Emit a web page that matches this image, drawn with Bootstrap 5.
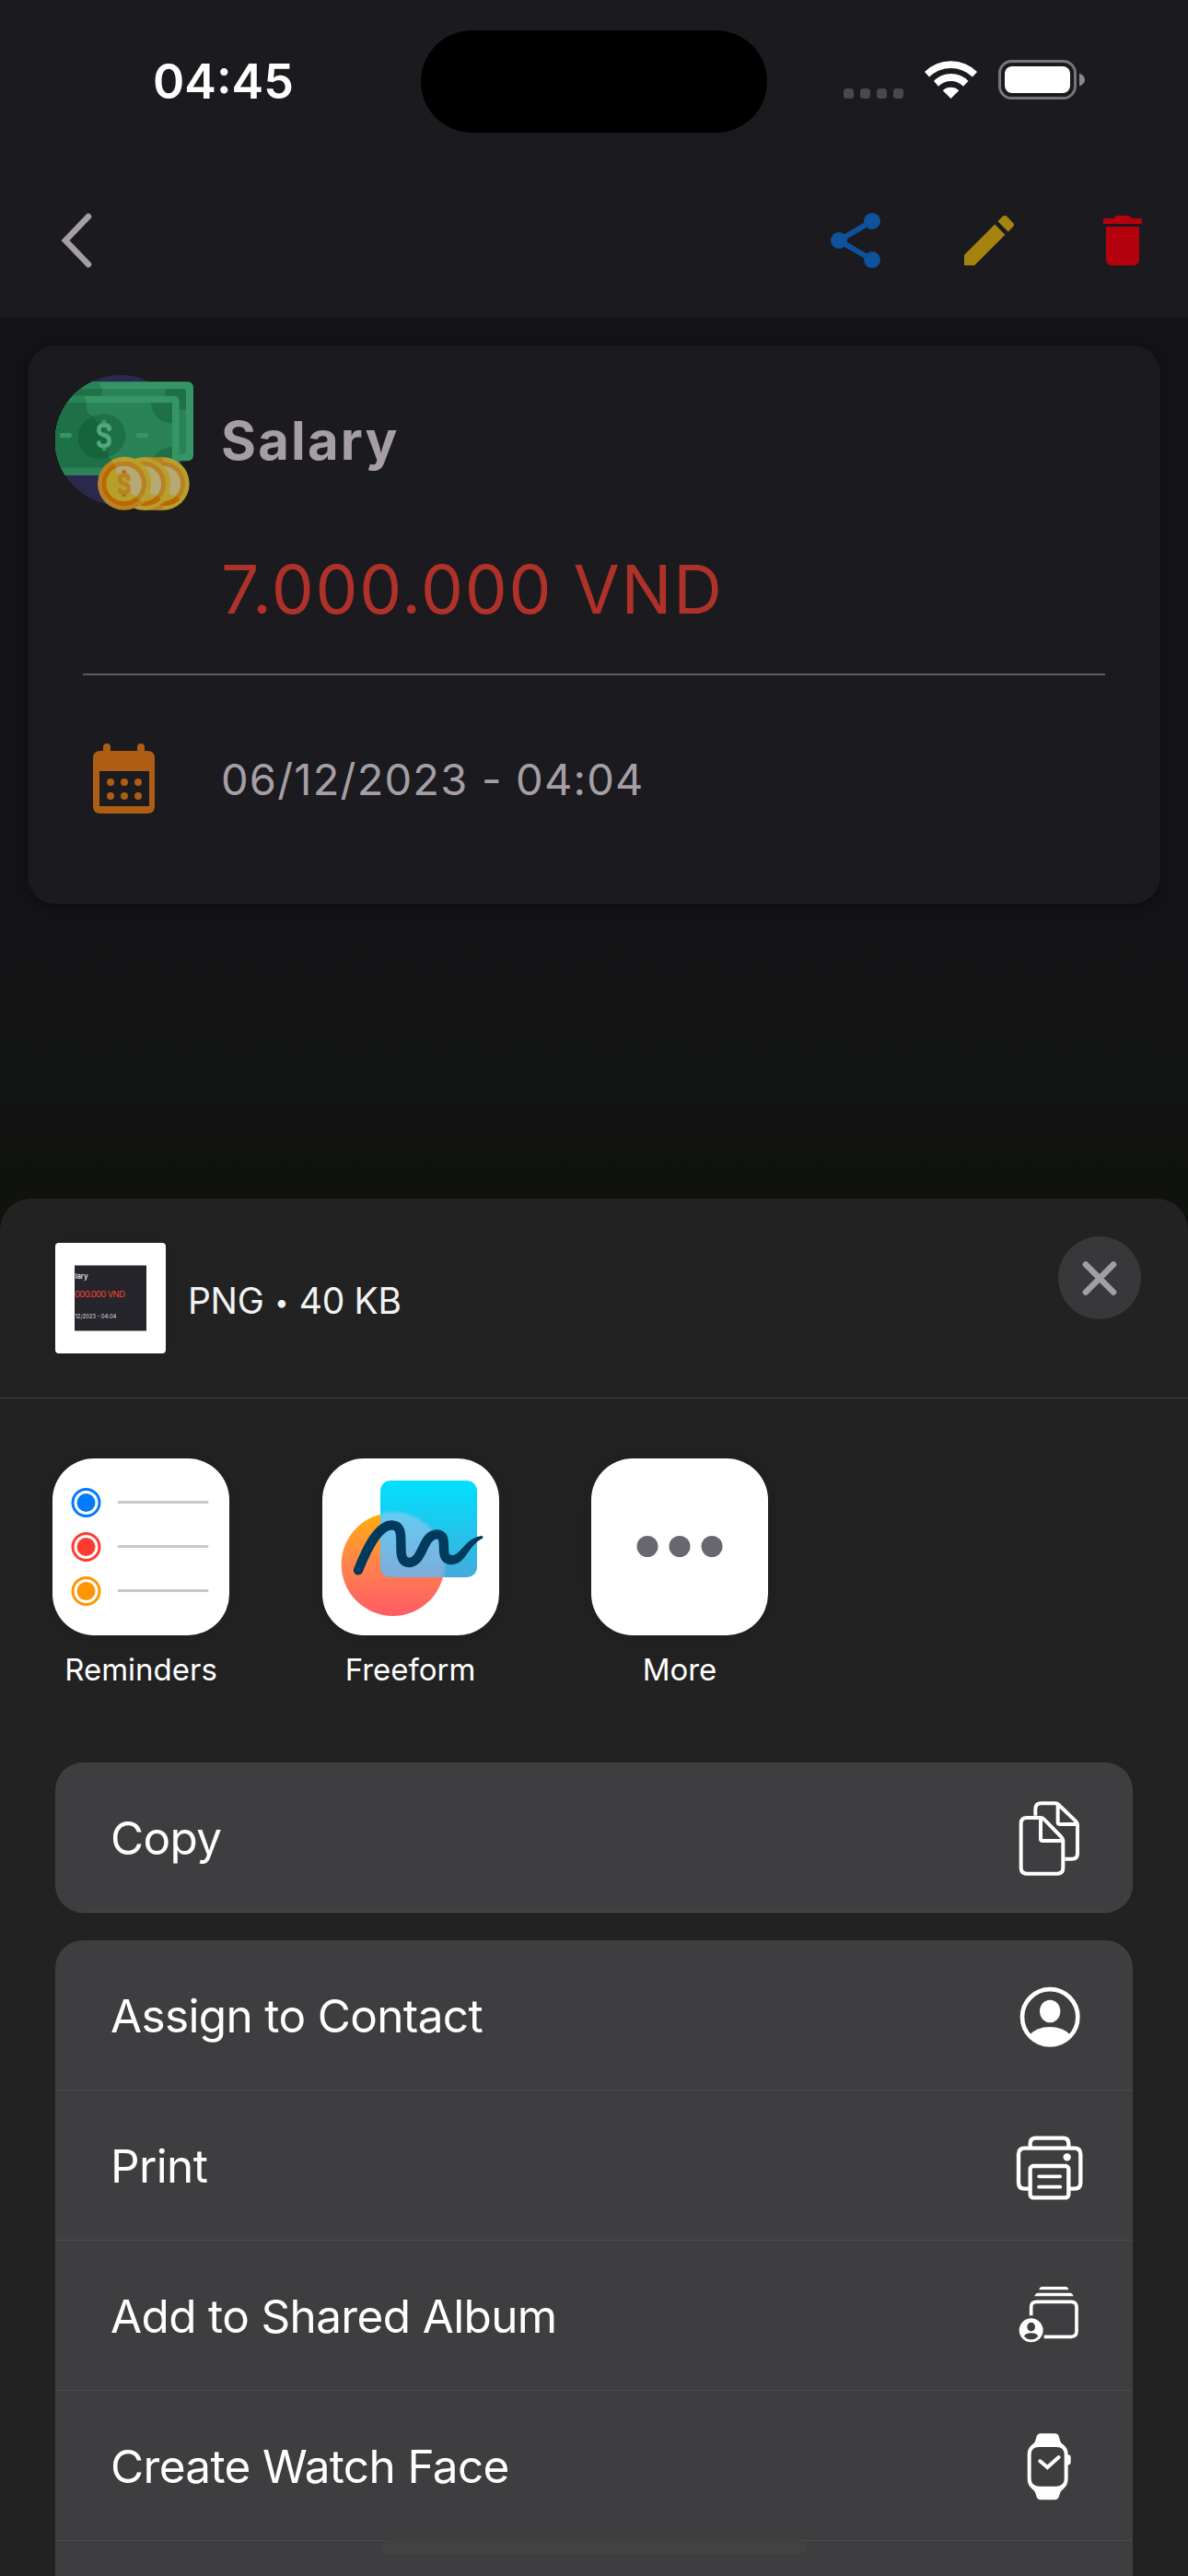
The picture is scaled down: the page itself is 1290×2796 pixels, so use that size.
<!DOCTYPE html>
<html lang="en">
<head>
<meta charset="utf-8">
<meta name="viewport" content="width=device-width, initial-scale=1">
<title>Transaction details</title>
<link href="https://cdn.jsdelivr.net/npm/bootstrap@5.3.0/dist/css/bootstrap.min.css" rel="stylesheet">
<style>
html,body{margin:0;overflow:hidden}
body{font-family:Inter,"Liberation Sans",sans-serif;background:#131315;color:#fff;line-height:1;width:1290px;height:2796px}
svg{display:block;flex:none}
.screen{width:1290px;height:2796px;background:linear-gradient(#131315 0,#131315 1000px,#121313 1190px,#10120e 1270px,#10120e 1400px)}
.top-zone{height:345px;background:#1b1a1f}
.status-row{height:177px}
.clock-col{width:457px;padding:1px 0 0 166px;font-size:52px;font-weight:600}
.island{width:376px;height:111px;border-radius:56px;background:#000}
.signal-col{padding:0 0 4px 83px}
.app-row{height:168px;padding:0 35px 0 47px}
.icon-gap{gap:73px}
.txn{margin:30px 30px 0;height:606px;border-radius:30px;background:#1b1a1e;box-shadow:0 3px 8px rgba(0,0,0,.3);padding-top:32px}
.txn-head{padding-left:30px;gap:30px;height:147px}
.txn-title{font-size:58px;font-weight:700;letter-spacing:2.2px;color:#a59fa5;padding-bottom:5px}
.txn-amount{font-size:73px;letter-spacing:1.7px;color:#ae312a;padding-left:210px;height:110px;margin-top:31px;line-height:110px}
.txn-rule{height:2px;background:#5c5c60;margin:36px 60px 0}
.txn-date{padding-left:71px;gap:71px;margin-top:74px;height:77px;font-size:47px;letter-spacing:1.2px;color:#a59fa5}
.share-sheet{margin-top:320px;height:1495px;border-radius:34px 34px 0 0;background:#222;overflow:hidden}
.sheet-head{height:217px;border-bottom:1px solid #404041;padding:41px 51px 0 60px}
.thumb{width:120px;height:120px;border-radius:4px;background:#fff;margin-top:7px;box-shadow:0 0 24px rgba(0,0,0,.12)}
.file-info{font-size:39px;letter-spacing:-.3px;color:#f2f2f2;padding-left:24px;padding-top:50px}
.file-dot{font-size:27px;vertical-align:3px;margin:0 1px}
.close-btn{width:90px;height:90px;border-radius:50%;background:#38383a}
.apps{padding:65px 0 0 57px;gap:100.5px;height:395px}
.app-item{width:192px}
.app-tile{width:192px;height:192px;border-radius:45px;background:#fff;overflow:hidden;box-shadow:0 0 30px rgba(0,0,0,.12)}
.app-name{font-size:33px;margin-top:21px;white-space:nowrap}
.actions{margin:0 60px;background:#3e3e40;border-radius:30px;overflow:hidden}
.actions + .actions{margin-top:30px;border-radius:30px 30px 0 0;height:690px}
.action-row{height:163px;padding:0 50.2px 0 60px;font-size:49.5px;letter-spacing:-.65px;border-bottom:1px solid #4b4b4d}
.action-row span{padding-top:4px}
.actions:first-of-type .action-row{border:0;letter-spacing:-1.2px}
.home-bar{position:absolute;left:414px;top:2757px;width:462px;height:15px;border-radius:8px;background:#424242}
</style>
<script src="https://cdn.jsdelivr.net/npm/bootstrap@5.3.0/dist/js/bootstrap.bundle.min.js"></script>
</head>
<body>
<div class="screen position-relative overflow-hidden">
  <header class="top-zone">
    <div class="status-row d-flex align-items-center">
      <div class="clock-col"><span>04:45</span></div>
      <div class="island"></div>
      <div class="signal-col">
        <svg width="262" height="43" viewBox="916 65 262 43">
          <g fill="#49484d"><rect x="916" y="96" width="11" height="11" rx="3.5"/><rect x="934" y="96" width="11" height="11" rx="3.5"/><rect x="952" y="96" width="11" height="11" rx="3.5"/><rect x="970" y="96" width="11" height="11" rx="3.5"/></g>
          <g fill="#fff">
            <path d="M1004 78A40.500 40.500 0 0 1 1061 78L1056 83.500A34 34 0 0 0 1009 83.500Z"/>
            <path d="M1014 88A26 26 0 0 1 1051.500 88L1046 93.700A19 19 0 0 0 1019 93.700Z"/>
            <path d="M1023.700 98.300A13 13 0 0 1 1041.300 98.300L1032.500 107Z"/>
          </g>
          <rect x="1085.500" y="66.500" width="82" height="40" rx="13" fill="none" stroke="#77767a" stroke-width="3"/>
          <rect x="1091" y="72" width="71" height="29" rx="8" fill="#fff"/>
          <path d="M1172 79.500Q1178 82 1178 86.500T1172 93.500Z" fill="#8a898c"/>
        </svg>
      </div>
    </div>
    <nav class="app-row d-flex align-items-center justify-content-between">
      <svg width="72" height="72" viewBox="48 225 72 72"><path d="M97 235L72 261L97 287" fill="none" stroke="#a59fa5" stroke-width="6.500" stroke-linecap="round"/></svg>
      <div class="icon-gap d-flex">
        <svg width="72" height="72" viewBox="0 0 24 24"><g fill="#0d529b" stroke="#0d529b"><path d="M18 5L6 12l12 7" fill="none" stroke-width="2"/><g stroke="none"><circle cx="18" cy="5" r="3"/><circle cx="6" cy="12" r="3"/><circle cx="18" cy="19" r="3"/></g></g></svg>
        <svg width="72" height="72" viewBox="0 0 24 24"><path fill="#a4840e" d="M3 17.250V21h3.750L17.810 9.940l-3.750-3.750L3 17.250zM20.710 7.040c.39-.39.39-1.020 0-1.410l-2.340-2.340c-.39-.39-1.020-.39-1.410 0l-1.830 1.830 3.750 3.750 1.830-1.830z"/></svg>
        <svg width="72" height="72" viewBox="0 0 24 24"><path fill="#b5000e" d="M6 19c0 1.100.9 2 2 2h8c1.100 0 2-.9 2-2V7H6v12zM19 4h-3.500l-.7-.7q-.3-.3-.8-.3h-4q-.5 0-.8.3l-.7.700H5v2h14V4z"/></svg>
      </div>
    </nav>
  </header>

  <main class="txn">
    <div class="txn-head d-flex align-items-center">
      <svg width="150" height="147" viewBox="90 50 450 441">
        <defs><clipPath id="disc"><path d="M303 50A213 213 0 0 0 303 477H560V50Z"/></clipPath></defs>
        <circle cx="303" cy="263" r="213" fill="#2b284b"/>
        <g clip-path="url(#disc)">
          <rect x="40" y="72" width="500" height="258" rx="18" fill="#359565"/>
          <path d="M90 72H234Q234 86 243 96V118H90Z" fill="#298356"/>
          <path d="M90 96H507Q516 96 516 105V298Q516 307 507 307H90Z" fill="#298356"/>
          <path d="M90 96H242V118H90ZM449 96H508Q516 96 516 104V162H494L449 118Z" fill="#1e7146"/>
          <path d="M40 118H476Q494 118 494 136V376H40Z" fill="#359565"/>
          <path d="M40 118H185Q188 134 194 141V170H40Z" fill="#298356"/>
          <rect x="40" y="141" width="431" height="211" fill="#298356"/>
          <path d="M40 141H192V160Q195 182 219 184Q216 206 248 212L264 316Q278 330 282 352H40Z" fill="#1e7146"/>
          <path d="M40 352H290V376H40Z" fill="#298356"/>
          <path d="M402 141H471V208Q408 203 402 141ZM471 284Q414 290 404 335L471 352Z" fill="#1e7146"/>
        </g>
        <circle cx="249" cy="247" r="70" fill="#1e7146"/>
        <path d="M217 185Q217 207 244 212L264 316A70 70 0 1 1 217 185Z" fill="#16653a"/>
        <g fill="#359565"><rect x="104" y="239" width="40" height="16" rx="7"/><rect x="354" y="239" width="40" height="16" rx="7"/></g>
        <path d="M241 200q8-10 16 0v10h-16zM241 288h16v5q-8 10-16 0z" fill="#359565"/>
        <path d="M266 226Q266 213 249 213Q232 213 232 229Q232 241 249 246Q266 251 266 264Q266 281 249 281Q232 281 232 271" fill="none" stroke="#4caa7b" stroke-width="14" stroke-linecap="round"/>
        <circle cx="441" cy="404" r="86" fill="#b89f2c"/><circle cx="441" cy="404" r="72" fill="#b88126"/><circle cx="441" cy="404" r="58" fill="#b89f2c"/>
        <path d="M451 462A58 58 0 0 0 484 443L497 456A76 76 0 0 1 430 475Z" fill="#b96900"/><path d="M440 346A58 58 0 0 1 484 441Q455 445 462 415Q475 380 440 346Z" fill="#b5a976"/>
        <path d="M378 490H441V476H378ZM378 318H441V332H378Z" fill="#b88126"/>
        <circle cx="378" cy="404" r="86" fill="#b89f2c"/><circle cx="378" cy="404" r="72" fill="#b88126"/><circle cx="378" cy="404" r="58" fill="#b89f2c"/>
        <path d="M388 462A58 58 0 0 0 421 443L434 456A76 76 0 0 1 367 475Z" fill="#b96900"/><path d="M377 346A58 58 0 0 1 421 441Q392 445 399 415Q412 380 377 346Z" fill="#b5a976"/>
        <circle cx="314" cy="404" r="86" fill="#b88126"/><path d="M273 328A86 86 0 0 1 374 466L359 450L285 345Z" fill="#b89f2c"/>
        <circle cx="314" cy="404" r="72" fill="#b96900"/><path d="M281 340A72 72 0 0 1 363 457L350 445L290 355Z" fill="#b88126"/>
        <circle cx="314" cy="404" r="58" fill="#b89f2c"/><path d="M287 353A58 58 0 0 1 357 443Q328 446 335 412Q329 377 304 374Q285 372 287 353Z" fill="#b5a976"/>
        <path d="M307 363q8-7 14 0v7h-14zM307 437h14v6q-7 8-14 0z" fill="#b96900"/>
        <path d="M329 388Q329 376 314 376Q300 376 300 390Q300 400 314 404Q329 408 329 419Q329 433 314 433Q300 433 300 425" fill="none" stroke="#b88126" stroke-width="13" stroke-linecap="round"/>
      </svg>
      <div class="txn-title">Salary</div>
    </div>
    <div class="txn-amount text-nowrap">7.000.000 VND</div>
    <div class="txn-rule"></div>
    <div class="txn-date d-flex align-items-center">
      <svg width="68" height="77" viewBox="101 808 68 77"><path fill="#ad5d14" fill-rule="evenodd" d="M112 816V812q0-4 4-4t4 4v4h29v-4q0-4 4-4t4 4v4h3q8 0 8 8v52q0 8-8 8h-51q-8 0-8-8v-52q0-8 8-8zM108 838v38h54v-38z"/><g fill="#ad5d14"><circle cx="120" cy="850" r="4"/><circle cx="135" cy="850" r="4"/><circle cx="150" cy="850" r="4"/><circle cx="120" cy="865" r="4"/><circle cx="135" cy="865" r="4"/><circle cx="150" cy="865" r="4"/></g></svg>
      <span>06/12/2023 - 04:04</span>
    </div>
  </main>

  <section class="share-sheet">
    <div class="sheet-head d-flex">
      <svg class="thumb" viewBox="0 0 120 120"><rect x="21" y="24" width="78" height="72" fill="#919196"/><rect x="21" y="25" width="78" height="70" fill="#26252b"/><g font-family="Inter, sans-serif"><text x="21.500" y="39" font-size="8" font-weight="500" fill="#eee" textLength="14">lary</text><text x="21" y="59" font-size="9.500" fill="#f0433a" textLength="55">000.000 VND</text><text x="21.500" y="82" font-size="6" fill="#ddd" textLength="45">12/2023 - 04:04</text></g></svg>
      <div class="file-info flex-grow-1">PNG <span class="file-dot">•</span> 40 KB</div>
      <div class="close-btn d-flex align-items-center justify-content-center"><svg width="90" height="90" viewBox="0 0 90 90"><path d="M30 30.500L60 60.500M60 30.500L30 60.500" stroke="#a09fa6" stroke-width="6.600" stroke-linecap="round"/></svg></div>
    </div>
    <div class="apps d-flex">
      <div class="app-item d-flex flex-column align-items-center">
        <svg class="app-tile" viewBox="0 0 192 192"><g fill="none" stroke-width="3"><circle cx="36.500" cy="48" r="14.500" stroke="#007aff"/><circle cx="36.500" cy="96" r="14.500" stroke="#ff3b30"/><circle cx="36.500" cy="144" r="14.500" stroke="#ff9500"/></g><circle cx="36.500" cy="48" r="10" fill="#007aff"/><circle cx="36.500" cy="96" r="10" fill="#ff3b30"/><circle cx="36.500" cy="144" r="10" fill="#ff9500"/><path d="M72 47.500h96M72 95.500h96M72 143.500h96" stroke="#c7c7cc" stroke-width="3" stroke-linecap="round"/></svg>
        <div class="app-name">Reminders</div>
      </div>
      <div class="app-item d-flex flex-column align-items-center">
        <svg class="app-tile" viewBox="30 39 576 576">
          <defs>
            <linearGradient id="sun" x1="0" y1="0" x2="0" y2="1"><stop offset="0" stop-color="#ffae0d"/><stop offset=".5" stop-color="#ff834c"/><stop offset="1" stop-color="#ff5b65"/></linearGradient>
            <linearGradient id="pane" x1="0" y1="0" x2="0" y2="1"><stop offset="0" stop-color="#00e0ff"/><stop offset="1" stop-color="#43abdb"/></linearGradient>
            <linearGradient id="frost" x1="0" y1="0" x2="0" y2="1"><stop offset="0" stop-color="#66cbf3"/><stop offset=".62" stop-color="#7cacda"/></linearGradient>
            <clipPath id="paneclip"><rect x="219" y="111" width="315" height="315" rx="34"/></clipPath>
            <filter id="soft"><feGaussianBlur stdDeviation="5"/></filter>
          </defs>
          <circle cx="260" cy="384" r="168" fill="url(#sun)"/>
          <rect x="219" y="111" width="315" height="315" rx="34" fill="url(#pane)"/>
          <g clip-path="url(#paneclip)"><circle cx="260" cy="384" r="170" fill="url(#frost)" filter="url(#soft)"/></g>
          <path d="M147 403C176 330 212 256 257 256C315 256 258 378 313 378C358 378 356 286 403 286C448 286 403 369 450 369" fill="none" stroke="#003a5d" stroke-width="31" stroke-linecap="round"/>
          <path d="M450 384.500C500 384.500 500 325 552 299Q556 291 548 291C494 299 482 355 450 355Z" fill="#003a5d"/>
        </svg>
        <div class="app-name">Freeform</div>
      </div>
      <div class="app-item d-flex flex-column align-items-center">
        <svg class="app-tile" viewBox="0 0 192 192"><g fill="#68676f"><circle cx="61" cy="95.500" r="11.500"/><circle cx="96" cy="95.500" r="11.500"/><circle cx="131" cy="95.500" r="11.500"/></g></svg>
        <div class="app-name">More</div>
      </div>
    </div>
    <div class="actions">
      <div class="action-row d-flex align-items-center justify-content-between">
        <span>Copy</span>
        <svg width="80" height="88" viewBox="148 151 240 264"><g fill="none" stroke="#fff" stroke-width="12" stroke-linejoin="round"><path d="M221 213V192Q221 173 240 173H286Q292 173 297 178L352 231Q358 237 358 243V336Q358 354 340 354H317"/><path d="M294 174V234Q294 241 301 241H357"/><path d="M193 220H238Q244 220 249 225L304 281Q311 288 311 295V383Q311 402 292 402H193Q174 402 174 383V239Q174 220 193 220Z"/><path d="M238 221V288Q238 295 245 295H309"/></g></svg>
      </div>
    </div>
    <div class="actions">
      <div class="action-row d-flex align-items-center justify-content-between">
        <span>Assign to Contact</span>
        <svg width="80" height="88" viewBox="148 729 240 264"><circle cx="268.500" cy="868" r="90.500" fill="none" stroke="#fff" stroke-width="14"/><ellipse cx="268.500" cy="849" rx="33.500" ry="37" fill="#fff"/><path d="M202 926Q226 900 268 900T335 926Q312 963 268 963T202 926Z" fill="#fff"/></svg>
      </div>
      <div class="action-row d-flex align-items-center justify-content-between">
        <span>Print</span>
        <svg width="80" height="88" viewBox="148 77 240 264"><g fill="none" stroke="#fff" stroke-width="13"><path d="M204 152V139Q204 121 222 121H311Q329 121 329 139V152"/><path d="M200 286H186Q166 286 166 266V174Q166 154 186 154H348Q368 154 368 174V266Q368 286 348 286H333"/><rect x="204" y="212" width="125" height="103" rx="10"/><path d="M232 246H302M232 280H302" stroke-width="11" stroke-linecap="round"/></g><circle cx="324" cy="183" r="12.500" fill="#fff"/></svg>
      </div>
      <div class="action-row d-flex align-items-center justify-content-between">
        <span>Add to Shared Album</span>
        <svg width="80" height="88" viewBox="148 566 240 264"><path fill="#fff" d="M233 615Q235 605 243 605H319Q327 605 329 615ZM218 636Q221 625 230 625H333Q342 625 345 636Z"/><path d="M207 699V672Q207 654 225 654H337Q355 654 355 672V750Q355 768 337 768H249" fill="none" stroke="#fff" stroke-width="11"/><circle cx="207" cy="747" r="39" fill="#fff"/><ellipse cx="207" cy="736" rx="13" ry="14.500" fill="#3e3e40"/><path d="M184 766Q190 756 207 756T230 766Q221 777 207 777T184 766Z" fill="#3e3e40"/></svg>
      </div>
      <div class="action-row d-flex align-items-center justify-content-between">
        <span>Create Watch Face</span>
        <svg width="80" height="88" viewBox="148 1055 240 264"><path fill="#fff" fill-rule="evenodd" d="M238 1083H284Q294 1083 297 1092L302 1108Q304 1114 311 1119Q327 1130 327 1152Q336 1152 336 1161V1176Q336 1185 327 1186V1230Q327 1253 311 1264Q304 1269 302 1275L297 1290Q294 1299 284 1299H238Q228 1299 225 1290L220 1275Q218 1269 211 1264Q195 1253 195 1230V1152Q195 1130 211 1119Q218 1114 220 1108L225 1092Q228 1083 238 1083ZM233 1127Q207 1127 207 1152V1230Q207 1255 233 1255H289Q315 1255 315 1230V1152Q315 1127 289 1127Z"/><path d="M236 1173L260 1193L297 1160" fill="none" stroke="#fff" stroke-width="12" stroke-linecap="round"/></svg>
      </div>
    </div>
  </section>
  <div class="home-bar"></div>
</div>
</body>
</html>
